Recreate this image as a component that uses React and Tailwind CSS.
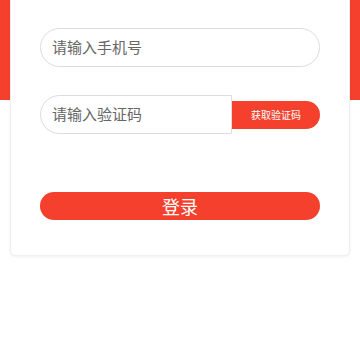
export default function App() {
  const font = { fontFamily: '"Noto Sans CJK SC", "Noto Sans", sans-serif' };
  return (
    <div className="w-[360px] h-[360px] overflow-hidden bg-white" style={font}>
      <div className="h-[100px] bg-[#f4402c]" />
      <div className="relative mt-[-110px] mx-[10px] rounded-[5px] bg-white border border-[#efefef] shadow-[0_1px_3px_rgba(0,0,0,0.06)] px-[29px] pt-[37px] pb-[35px] flex flex-col">
        <div className="h-[39px] rounded-full border border-[#dcdcdc] flex items-center pl-[11px]">
          <input
            className="w-full bg-transparent outline-none text-[15px] text-[#333] placeholder:text-[#666]"
            placeholder="请输入手机号"
          />
        </div>
        <div className="mt-[28px] flex items-center">
          <div className="w-[192px] h-[39px] rounded-l-full border border-[#dcdcdc] flex items-center pl-[11px]">
            <input
              className="w-full bg-transparent outline-none text-[15px] text-[#333] placeholder:text-[#666]"
              placeholder="请输入验证码"
            />
          </div>
          <button className="flex-1 h-[28px] rounded-r-full bg-[#f4402c] text-white text-[10px] flex items-center justify-center">
            获取验证码
          </button>
        </div>
        <button className="mt-[58px] h-[28px] rounded-full bg-[#f4402c] text-white text-[18px] leading-none flex items-center justify-center">
          登录
        </button>
      </div>
    </div>
  );
}
